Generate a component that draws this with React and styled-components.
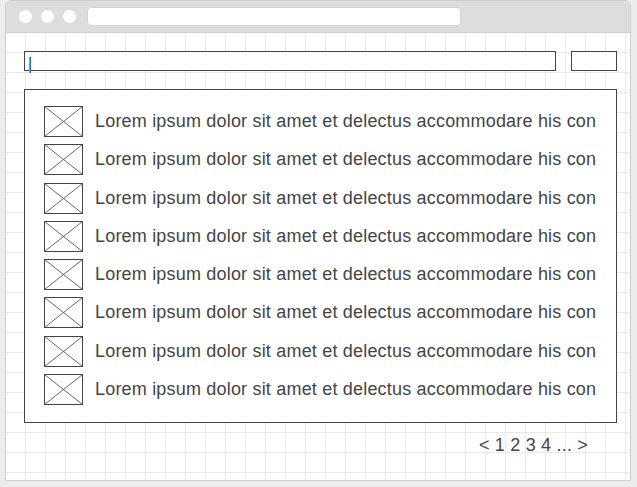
import styled, {createGlobalStyle} from "styled-components";

const GlobalStyle = createGlobalStyle`
    html, body {
        margin: 0;
        padding: 0;
        background: #ececec;
    }
    body {
        font-family: "Liberation Sans", Arial, sans-serif;
        color: #444;
    }
`;

const Window = styled.div`
    box-sizing: border-box;
    margin-left: 5px;
    width: 626px;
    height: 481px;
    border: 1px solid #cdcdcd;
    border-radius: 6px 6px 0 0;
    overflow: hidden;
    background: #fff;
    display: flex;
    flex-direction: column;
`;

const TitleBar = styled.div`
    height: 31px;
    flex-shrink: 0;
    background: #dddddd;
    border-bottom: 1px solid #cfcfcf;
    display: flex;
    align-items: center;
    padding-left: 13px;
    gap: 9px;
`;

const Dot = styled.span`
    width: 13px;
    height: 13px;
    border-radius: 50%;
    background: #fff;
`;

const AddressBar = styled.div`
    box-sizing: border-box;
    margin-left: 2px;
    width: 374px;
    height: 19px;
    background: #fff;
    border: 1px solid #d4d4d4;
    border-radius: 4px;
`;

const Canvas = styled.div`
    flex: 1;
    padding: 18px 13px 0 18px;
    background-color: #fff;
    background-image: linear-gradient(to right, #e9e9e9 1px, transparent 1px),
    linear-gradient(to bottom, #e9e9e9 1px, transparent 1px);
    background-size: 20px 20px;
    background-position: 19px 19px;
`;

const SearchRow = styled.div`
    display: flex;
    gap: 15px;
`;

const SearchInput = styled.div`
    position: relative;
    box-sizing: border-box;
    width: 532px;
    height: 20px;
    border: 1px solid #444;
    background: #fff;

    & > .caret {
        position: absolute;
        left: 4px;
        top: 5px;
        width: 1px;
        height: 16px;
        background: #1f72b8;
        border-left: 1px solid #d2912e;
    }
`;

const SearchButton = styled.div`
    box-sizing: border-box;
    width: 46px;
    height: 20px;
    border: 1px solid #444;
    background: #fff;
`;

const ListBox = styled.div`
    box-sizing: border-box;
    margin-top: 18px;
    width: 593px;
    height: 334px;
    border: 1px solid #444;
    background: #fff;
    padding: 16px 0 0 19px;
    display: flex;
    flex-direction: column;
    gap: 7.3px;
`;

const Row = styled.div`
    display: flex;
    align-items: center;
    gap: 12px;
    height: 31px;
`;

const Thumb = styled.svg`
    flex-shrink: 0;
    width: 39px;
    height: 31px;
`;

const RowText = styled.span`
    font-size: 18px;
    letter-spacing: 0.19px;
    color: #444;
    white-space: nowrap;
`;

const Pager = styled.div`
    display: flex;
    justify-content: flex-end;
    padding: 12px 29px 0 0;
    width: 593px;
    box-sizing: border-box;
    font-size: 18px;
    letter-spacing: 0.2px;
    color: #444;
`;

function Placeholder() {
    return (
        <Thumb viewBox="0 0 39 31">
            <rect x="0.5" y="0.5" width="38" height="30" fill="#fff" stroke="#444"/>
            <line x1="0.5" y1="0.5" x2="38.5" y2="30.5" stroke="#555" strokeWidth="0.9"/>
            <line x1="38.5" y1="0.5" x2="0.5" y2="30.5" stroke="#555" strokeWidth="0.9"/>
        </Thumb>
    );
}

const items = Array.from({length: 8}, () => "Lorem ipsum dolor sit amet et delectus accommodare his con");

export default function App() {
    return (
        <>
            <GlobalStyle/>
            <Window>
                <TitleBar>
                    <Dot/>
                    <Dot/>
                    <Dot/>
                    <AddressBar/>
                </TitleBar>
                <Canvas>
                    <SearchRow>
                        <SearchInput>
                            <span className="caret"/>
                        </SearchInput>
                        <SearchButton/>
                    </SearchRow>
                    <ListBox>
                        {items.map((text, i) => (
                            <Row key={i}>
                                <Placeholder/>
                                <RowText>{text}</RowText>
                            </Row>
                        ))}
                    </ListBox>
                    <Pager>&lt; 1 2 3 4 ... &gt;</Pager>
                </Canvas>
            </Window>
        </>
    );
}
